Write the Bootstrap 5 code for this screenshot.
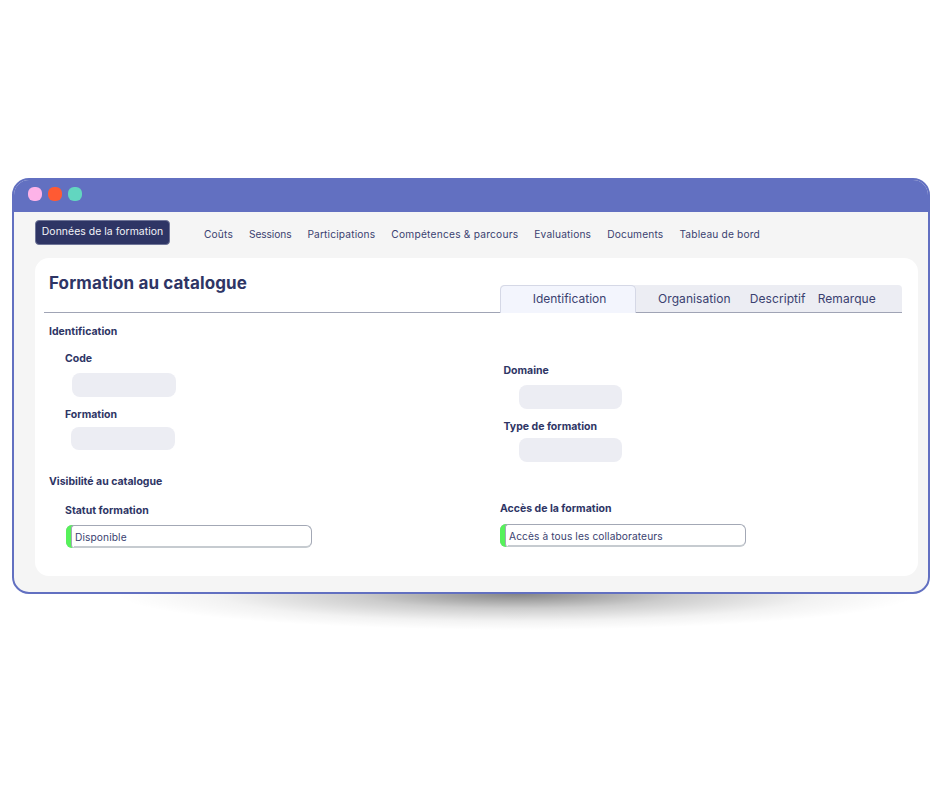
<!DOCTYPE html>
<html lang="fr">
<head>
<meta charset="utf-8">
<title>Formation au catalogue</title>
<link rel="stylesheet" href="https://cdn.jsdelivr.net/npm/bootstrap@5.3.0/dist/css/bootstrap.min.css">
<style>
html,body{background:#fff;height:100%;overflow:hidden}
body{font-family:Inter,"Liberation Sans",sans-serif;color:#2e3565;padding:178px 0 0 12px}
.appwin{width:918px;height:416px;border:2px solid #6270c1;border-radius:17px;background:#f5f5f5;overflow:hidden}
.titlebar{height:34px;background:#6270c1;margin:-2px -2px 0;padding:9px 15.5px 0;gap:6px}
.wdot{width:14px;height:14px;border-radius:6px}
.topnav{padding:8px 0 0 21px;height:46px}
.activepill{width:135px;height:25px;background:#2e3565;color:#f2f3f8;border:1px solid #6f7598;border-radius:4px;font-size:10.4px;line-height:22px;text-align:center;letter-spacing:.05px}
.topitem{position:relative;top:7px;font-size:10.2px;line-height:14px;letter-spacing:.16px;color:#3a4170}
.topitem:nth-child(2){letter-spacing:-.1px}
.topitem:nth-child(4){letter-spacing:.22px}
.sheet{width:883px;height:318px;margin-left:21px;background:#fff;border-radius:14px;position:relative}
.headrow{height:55px;margin-left:9px;width:858px;border-bottom:1px solid #a0a4b5}
.pagetitle{font-size:17px;font-weight:700;line-height:20px;margin:15px 0 0 5px;letter-spacing:.12px}
.tabstrip{width:402px;height:27px;margin-top:27px;background:#ecedf3;border-radius:4px 4px 0 0;font-size:12px;line-height:27px;color:#3a4170}
.tabon{width:136px;height:28px;background:#f3f5fd;border:1px solid #d5d8e6;border-bottom:0;border-radius:5px 5px 0 0;text-align:center;line-height:26px;padding-left:3px}
.tabitem{letter-spacing:.08px}
.formgrid{padding-left:14px}
.leftcol{width:451px}
.sectitle{font-size:10.5px;font-weight:700;line-height:14px;color:#2e3565}
.fieldlab{font-size:10.5px;font-weight:700;line-height:14px;color:#2e3565}
.ghost{width:104px;height:24px;background:#ecedf3;border-radius:8px}
.statusbox{width:246px;height:23px;border:1px solid #a3a8b5;border-bottom-color:#c6cbd0;border-bottom-width:2px;border-radius:6px;background:#fff;position:relative;font-size:10.2px;line-height:22px;padding-left:8px;color:#3a4170;letter-spacing:.1px}
.statusbox::before{content:"";position:absolute;left:-1px;top:-1px;bottom:-2px;width:7px;background:#56f25a;border-radius:6px 0 0 6px;z-index:0}
.statusbox::after{content:"";position:absolute;left:4px;top:-1px;bottom:-2px;width:3px;background:#fff;border-left:1px solid #a3a8b5;border-radius:6px 0 0 6px;border-top:1px solid #a3a8b5;border-bottom:1px solid #c6cbd0}
.statusbox span{position:relative;z-index:1}
.floorshade{width:800px;height:36px;margin-left:105px;background:radial-gradient(ellipse 50% 100% at 50% 0,rgba(0,0,0,.48) 0,rgba(0,0,0,.2) 40%,rgba(0,0,0,.05) 75%,rgba(0,0,0,0) 100%)}
.m1{margin:13px 0 0 16px}.m2{margin:7px 0 0 23px}.m3{margin:11px 0 0 16px}.m4{margin:5px 0 0 22px;height:23px}
.r1{margin:51px 0 0 3.5px}.r2{margin:7px 0 0 19px;width:103px}.r3{margin:11px 0 0 3.5px}.r4{margin:4px 0 0 19px;width:103px}
.s1{margin:25px 0 0 0}.s2{margin:15px 0 0 16px}.s3{margin:7px 0 0 17px}
.ra{margin:40px 0 0 0}.rb{margin:8px 0 0 0}
</style>
</head>
<body>
<div class="appwin">
  <div class="titlebar d-flex">
    <span class="wdot" style="background:#fdb3e8"></span>
    <span class="wdot" style="background:#ff5a33"></span>
    <span class="wdot" style="background:#62d6c0"></span>
  </div>
  <nav class="topnav d-flex">
    <div class="activepill">Données de la formation</div>
    <div class="d-flex" style="margin-left:34px;gap:16px">
      <span class="topitem">Coûts</span>
      <span class="topitem">Sessions</span>
      <span class="topitem">Participations</span>
      <span class="topitem">Compétences &amp; parcours</span>
      <span class="topitem">Evaluations</span>
      <span class="topitem">Documents</span>
      <span class="topitem">Tableau de bord</span>
    </div>
  </nav>
  <main class="sheet">
    <div class="headrow d-flex justify-content-between">
      <h1 class="pagetitle">Formation au catalogue</h1>
      <div class="tabstrip d-flex">
        <div class="tabon">Identification</div>
        <span class="tabitem" style="margin-left:22px">Organisation</span>
        <span class="tabitem" style="margin-left:19px">Descriptif</span>
        <span class="tabitem" style="margin-left:12px">Remarque</span>
      </div>
    </div>
    <div class="formgrid d-flex">
      <div class="leftcol">
        <div class="sectitle" style="margin-top:12px">Identification</div>
        <div class="fieldlab m1">Code</div>
        <div class="ghost m2"></div>
        <div class="fieldlab m3">Formation</div>
        <div class="ghost m4"></div>
        <div class="sectitle s1">Visibilité au catalogue</div>
        <div class="fieldlab s2">Statut formation</div>
        <div class="statusbox s3"><span>Disponible</span></div>
      </div>
      <div>
        <div class="fieldlab r1">Domaine</div>
        <div class="ghost r2"></div>
        <div class="fieldlab r3">Type de formation</div>
        <div class="ghost r4"></div>
        <div class="fieldlab ra">Accès de la formation</div>
        <div class="statusbox rb"><span>Accès à tous les collaborateurs</span></div>
      </div>
    </div>
  </main>
</div>
<div class="floorshade"></div>
<script src="https://cdn.jsdelivr.net/npm/bootstrap@5.3.0/dist/js/bootstrap.bundle.min.js"></script>
</body>
</html>
